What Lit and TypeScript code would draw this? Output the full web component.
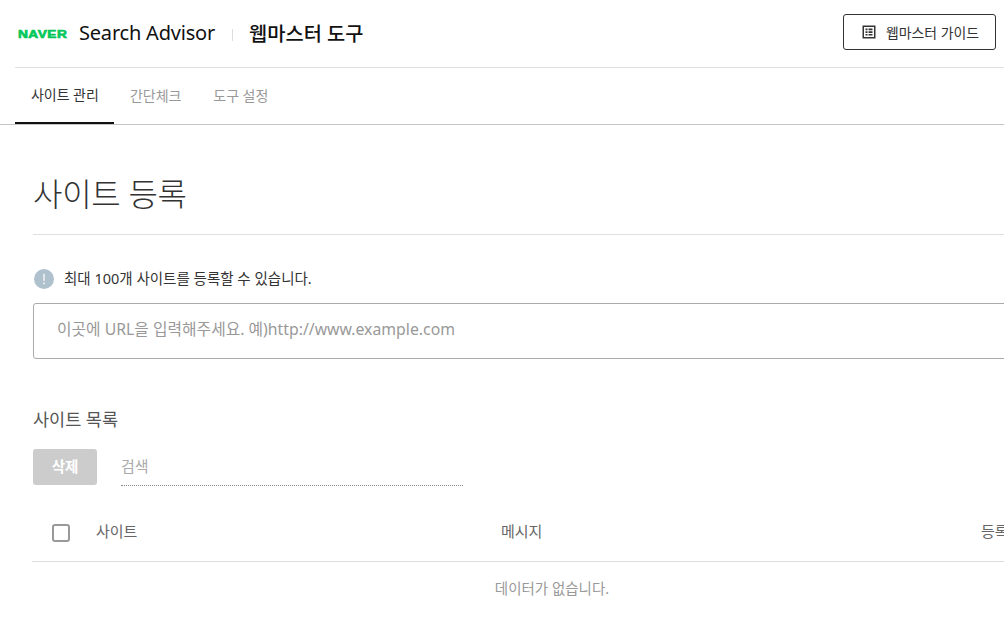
import { LitElement, html, css } from 'lit';
import { customElement } from 'lit/decorators.js';

const TABS = ['사이트 관리', '간단체크', '도구 설정'];

@customElement('app-root')
export class AppRoot extends LitElement {
  static override styles = css`
    :host {
      display: block;
      width: 1004px;
      height: 620px;
      overflow: hidden;
      background: #fff;
      font-family: 'Noto Sans', 'Noto Sans CJK KR', sans-serif;
      color: #333;
    }

    .header {
      display: flex;
      align-items: center;
      height: 67px;
      margin-left: 15px;
      padding-right: 8px;
      border-bottom: 1px solid #e0e0e0;
    }

    .logo {
      width: 49px;
      margin-left: 3px;
      font: 900 11.5px 'Liberation Sans', sans-serif;
      -webkit-text-stroke: 0.7px #03c75a;
      color: #03c75a;
      letter-spacing: 0.4px;
      transform-origin: left center;
      transform: scaleX(1.19);
    }

    .brand {
      margin-left: 12px;
      margin-bottom: 3px;
      font-size: 20px;
      letter-spacing: -0.2px;
      color: #111;
    }

    .sep {
      width: 1px;
      height: 12px;
      margin: 2px 16px 0 17px;
      background: #ddd;
    }

    .tool {
      margin-bottom: 3px;
      font-size: 19.8px;
      font-weight: 500;
      color: #111;
    }

    .guide {
      display: flex;
      align-items: center;
      gap: 10px;
      height: 36px;
      width: 153px;
      box-sizing: border-box;
      margin: 0 0 3px auto;
      padding-left: 18px;
      border: 1px solid #333;
      border-radius: 3px;
      font-size: 13.9px;
      color: #333;
    }

    .tabs {
      display: flex;
      height: 56px;
      border-bottom: 1px solid #c4c4c4;
    }

    .tab {
      display: flex;
      align-items: center;
      padding: 0 16px 2px;
      height: 56px;
      box-sizing: border-box;
      white-space: nowrap;
      font-size: 14px;
      letter-spacing: -0.05px;
      color: #999;
    }

    .tab.active {
      margin-left: 15px;
      width: 99px;
      color: #333;
      border-bottom: 2px solid #111;
    }

    .main {
      width: 1300px;
      padding: 0 0 0 33px;
      box-sizing: border-box;
    }

    h1 {
      margin: 0;
      height: 110px;
      box-sizing: border-box;
      padding-top: 43px;
      border-bottom: 1px solid #e0e0e0;
      font-size: 32px;
      line-height: 52px;
      font-weight: 300;
      letter-spacing: -0.3px;
      color: #333;
    }

    .notice {
      display: flex;
      align-items: center;
      gap: 10px;
      margin-top: 32px;
      height: 22px;
      font-size: 14.5px;
      color: #333;
    }

    .notice svg {
      margin: 1px 0 0 1px;
    }

    .notice span {
      margin-bottom: 2px;
    }

    .url {
      display: flex;
      align-items: center;
      height: 56px;
      margin-top: 14px;
      box-sizing: border-box;
      padding: 0 0 5px 23px;
      border: 1px solid #aaa;
      border-radius: 3px;
      font-size: 15.8px;
      color: #999;
    }

    h2 {
      margin: 48px 0 0;
      font-size: 17.5px;
      line-height: 24px;
      font-weight: 400;
      color: #555;
    }

    .tools {
      display: flex;
      gap: 24px;
      margin-top: 18px;
    }

    .delete {
      width: 64px;
      height: 36px;
      line-height: 35px;
      text-align: center;
      border-radius: 3px;
      background: #ccc;
      color: #fff;
      font-size: 14.5px;
      font-weight: 700;
    }

    .search {
      width: 342px;
      height: 37px;
      line-height: 35px;
      box-sizing: border-box;
      border-bottom: 1px dotted #888;
      font-size: 15px;
      color: #aaa;
    }

    .thead {
      display: grid;
      grid-template-columns: 64px 405px 480px 1fr;
      align-items: center;
      height: 76px;
      padding-top: 14px;
      box-sizing: border-box;
      margin-left: -1px;
      border-bottom: 1px solid #ddd;
      font-size: 15px;
      color: #666;
    }

    .check {
      justify-self: start;
      width: 18px;
      height: 18px;
      margin: 5px 0 0 20px;
      box-sizing: border-box;
      border: 2px solid #999;
      border-radius: 3px;
    }

    .empty {
      width: 1038px;
      text-align: center;
      margin-top: 16px;
      font-size: 14.5px;
      line-height: 20px;
      color: #999;
    }
  `;

  override render() {
    return html`
      <div class="header">
        <span class="logo">NAVER</span>
        <span class="brand">Search Advisor</span>
        <span class="sep"></span>
        <span class="tool">웹마스터 도구</span>
        <div class="guide">
          <svg width="14" height="14" viewBox="0 0 14 14">
            <path fill="#333" fill-rule="evenodd" d="M0.500 0.500h13v13h-13zM2 2v10h10V2z" />
            <path fill="#333" d="M3.500 3.500h2v1.700h-2zM6.500 3.500h4v1.700h-4zM3.500 6.200h2v1.700h-2zM6.500 6.200h4v1.700h-4zM3.500 8.900h2v1.700h-2zM6.500 8.900h4v1.700h-4z" />
          </svg>
          웹마스터 가이드
        </div>
      </div>
      <div class="tabs">
        ${TABS.map(
          (tab, index) => html`<div class="tab ${index === 0 ? 'active' : ''}">${tab}</div>`
        )}
      </div>
      <div class="main">
        <h1>사이트 등록</h1>
        <div class="notice">
          <svg width="20" height="20" viewBox="0 0 21 21">
            <circle cx="10.500" cy="10.500" r="10.500" fill="#afc1cc" />
            <rect x="9.500" y="5" width="2" height="7.500" fill="#e4eaee" />
            <rect x="9.500" y="14" width="2" height="2" fill="#e4eaee" />
          </svg>
          <span>최대 100개 사이트를 등록할 수 있습니다.</span>
        </div>
        <div class="url">이곳에 URL을 입력해주세요. 예)http://www.example.com</div>
        <h2>사이트 목록</h2>
        <div class="tools">
          <div class="delete">삭제</div>
          <div class="search">검색</div>
        </div>
        <div class="thead">
          <span class="check"></span>
          <span>사이트</span>
          <span>메시지</span>
          <span>등록일</span>
        </div>
        <div class="empty">데이터가 없습니다.</div>
      </div>
    `;
  }
}
